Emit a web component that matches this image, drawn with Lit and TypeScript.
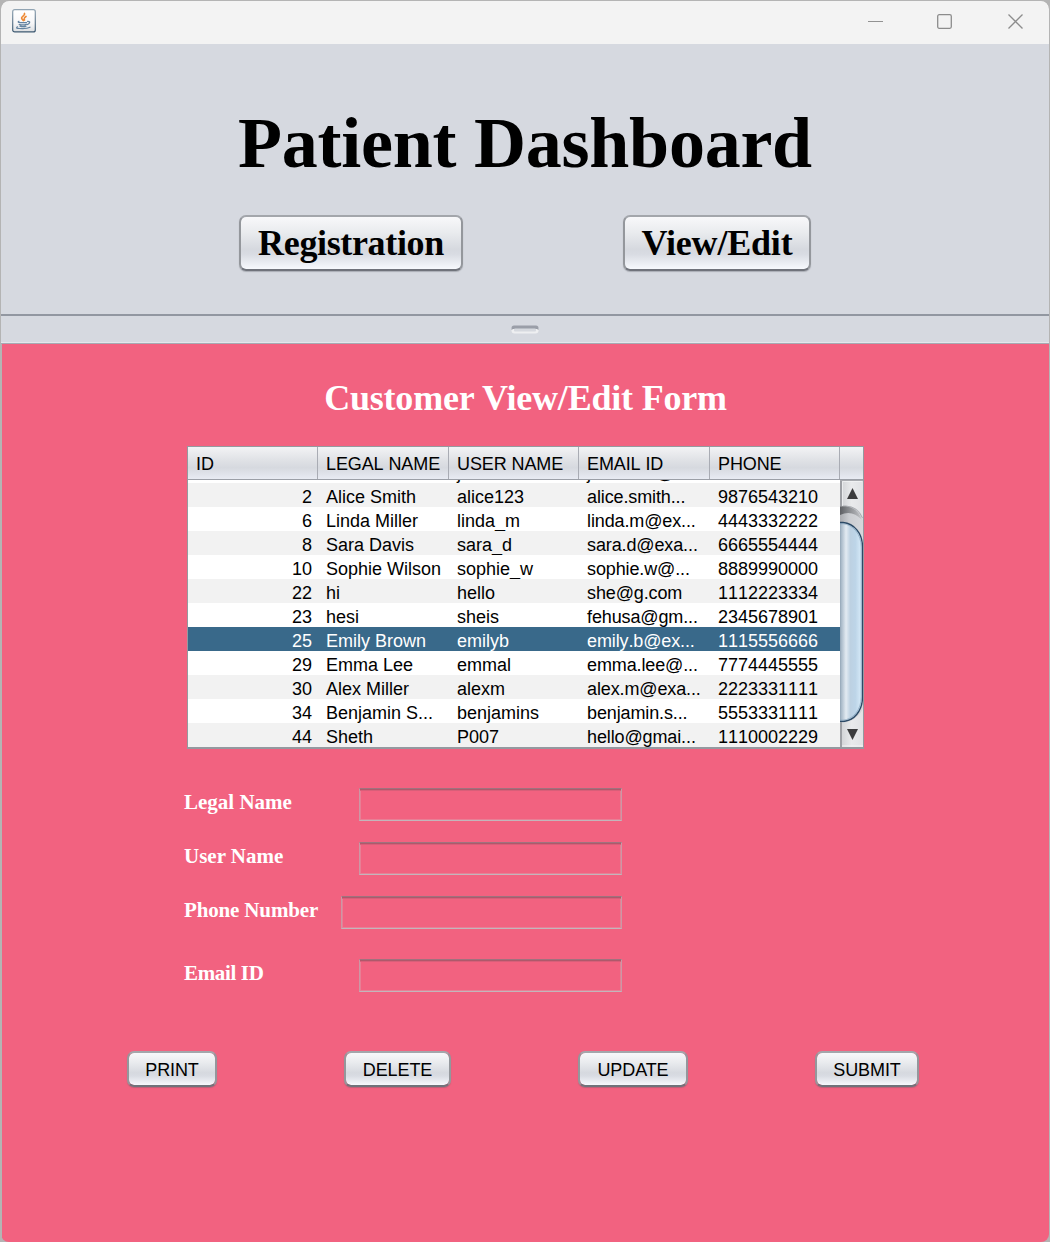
import { LitElement, html, css } from "lit";
import { customElement } from "lit/decorators.js";

const rows: [string, string, string, string, string][] = [
  ["2", "Alice Smith", "alice123", "alice.smith...", "9876543210"],
  ["6", "Linda Miller", "linda_m", "linda.m@ex...", "4443332222"],
  ["8", "Sara Davis", "sara_d", "sara.d@exa...", "6665554444"],
  ["10", "Sophie Wilson", "sophie_w", "sophie.w@...", "8889990000"],
  ["22", "hi", "hello", "she@g.com", "1112223334"],
  ["23", "hesi", "sheis", "fehusa@gm...", "2345678901"],
  ["25", "Emily Brown", "emilyb", "emily.b@ex...", "1115556666"],
  ["29", "Emma Lee", "emmal", "emma.lee@...", "7774445555"],
  ["30", "Alex Miller", "alexm", "alex.m@exa...", "2223331111"],
  ["34", "Benjamin S...", "benjamins", "benjamin.s...", "5553331111"],
  ["44", "Sheth", "P007", "hello@gmai...", "1110002229"],
];

@customElement("app-root")
export class AppRoot extends LitElement {
  static styles = css`
    :host { display: block; width: 1050px; height: 1242px; background: #b4b4b4; overflow: hidden; font-kerning: none; }
    * { box-sizing: border-box; }
    .window { height: 1242px; margin: 0 1px; padding-top: 1px; display: flex; flex-direction: column; border-radius: 9px 9px 8px 8px; overflow: hidden; background: #b4b4b4; }
    .titlebar { height: 43px; flex: none; background: #f3f3f3; display: flex; justify-content: space-between; border-radius: 8px 8px 0 0; padding: 8px 25px 0 11px; }
    .titlebar svg { display: block; }
    .controls { display: flex; gap: 54px; padding-top: 5px; }
    .controls svg:last-child { margin-left: 1px; }
    .top { height: 270px; flex: none; background: #d6d9e0; display: flex; flex-direction: column; align-items: center; padding-top: 57px; font-family: "Liberation Serif", serif; font-weight: bold; color: #000; }
    .top h1 { margin: 0; font-size: 72px; line-height: 84px; height: 84px; white-space: nowrap; letter-spacing: -.25px; }
    .nav { display: flex; justify-content: space-between; width: 572px; margin-top: 30px; }
    .btn { display: flex; align-items: center; justify-content: center; border: 2px solid #8f9299; border-color: #a3a6ab #94979c #70737b; border-radius: 7px; background: linear-gradient(#f8f8fa 0%, #e9ebee 30%, #d6d9df 62%, #d9dce3 72%, #f7f9fd 100%) padding-box; box-shadow: 0 1px 1px rgba(90,92,100,.35); color: #000; white-space: nowrap; padding: 0; margin: 0; font-kerning: none; }
    .nav .btn { font: bold 36px/40px "Liberation Serif", serif; height: 56px; }
    .nav .registration { width: 224px; letter-spacing: -.35px; }
    .nav .view { width: 188px; letter-spacing: -.2px; }
    .divider { height: 30px; flex: none; background: #d6d9e0; border-top: 2px solid #9297a1; border-bottom: 1px solid #a6aab3; display: flex; justify-content: center; padding-top: 9px; box-shadow: inset 0 -1px 0 #e4e6eb; }
    .bottom { flex: 1; background: #f26280; margin-left: 1px; display: flex; flex-direction: column; padding-top: 33px; }
    .bottom h2 { margin: 0; font: bold 36px/42px "Liberation Serif", serif; letter-spacing: -.2px; color: #fff; text-align: center; height: 42px; white-space: nowrap; }
    .table { width: 677px; height: 303px; margin: 27px 0 0 185px; border: 1px solid #95999f; border-bottom-width: 2px; background: #fff; font: 18px/24px "Liberation Sans", sans-serif; font-kerning: none; color: #000; display: flex; flex-direction: column; }
    .head { height: 33px; flex: none; display: grid; grid-template-columns: 130px 131px 130px 131px 130px 23px; background: linear-gradient(#f3f3f5, #e0e2e6 40%, #d6d9df 65%, #e8ebf3); border-bottom: 1px solid #9b9fa7; letter-spacing: -.1px; }
    .head span { padding: 5px 0 0 8px; border-right: 1px solid #a9acb4; white-space: nowrap; }
    .head span:last-child { border: 0; }
    .scroll { display: flex; flex: 1; min-height: 0; }
    .body { width: 652px; height: 267px; overflow: hidden; }
    .spacer { height: 3px; background: #fff; overflow: hidden; display: flex; flex-direction: column; justify-content: flex-end; }
    .row { display: grid; grid-template-columns: 130px 131px 130px 131px 130px; height: 24px; flex: none; line-height: 28px; overflow: hidden; }
    .row span { padding-left: 8px; white-space: nowrap; }
    .row .num { text-align: right; padding: 0 6px 0 0; }
    .row .mail { letter-spacing: -.12px; }
    .body > .row:nth-child(even) { background: #f2f2f2; }
    .body > .row.selected { background: #39698a; color: #fff; }
    .form { display: grid; grid-template-columns: 438px; margin: 39px 0 0 182px; height: 205px; align-content: start; }
    .field { display: flex; justify-content: space-between; height: 54px; font: bold 21px/28px "Liberation Serif", serif; color: #fff; }
    .field.gap { height: 63px; letter-spacing: -.15px; }
    .field.last { letter-spacing: -.35px; }
    .box { width: 263px; height: 33px; border: 1px solid #cb98a5; border-top-color: #a0727e; border-bottom-color: #c3b5bb; box-shadow: inset 0 1px 0 #ae596b, inset 0 2px 0 #d85f79, inset 0 0 0 1px #e87f95; background: transparent; padding: 0; outline: none; border-radius: 0; }
    .wide { width: 281px; }
    .actions { display: flex; margin: 58px 0 0 125px; }
    .actions .btn { font: 18px/20px "Liberation Sans", sans-serif; height: 36px; letter-spacing: -.1px; padding-top: 1px; }
  `;

  private grip() {
    return html`<svg width="28" height="9" viewBox="0 0 28 9">
      <rect x="0.500" y="1" width="27" height="7.500" rx="3" fill="#eeeff1" />
      <path d="M.500 5V3Q.500 .500 3 .500H25Q27.500 .500 27.500 3V5L26 4H2Z" fill="#9a9ea8" />
      <rect x="3" y="3.500" width="22" height="3" rx="1" fill="#d6d9df" />
    </svg>`;
  }

  private scrollbar() {
    return html`<svg width="23" height="267" viewBox="0 0 23 267">
      <defs>
        <linearGradient id="track"><stop stop-color="#a9abaf" /><stop offset=".4" stop-color="#cbcdd1" /><stop offset="1" stop-color="#d6d8dc" /></linearGradient>
        <linearGradient id="thumb"><stop stop-color="#8396a8" /><stop offset=".1" stop-color="#a9bac9" /><stop offset=".3" stop-color="#e3ebf2" /><stop offset=".48" stop-color="#bdd1e2" /><stop offset=".7" stop-color="#bdd5e8" /><stop offset="1" stop-color="#dceffc" /></linearGradient>
        <linearGradient id="cap"><stop stop-color="#cfd1d4" /><stop offset=".5" stop-color="#e9eaec" /><stop offset="1" stop-color="#e1e2e5" /></linearGradient>
        <linearGradient id="shade"><stop stop-color="#505256" /><stop offset=".8" stop-color="#a9abaf" /><stop offset="1" stop-color="#c5c7cb" /></linearGradient>
      </defs>
      <rect width="23" height="267" fill="url(#track)" />
      <path d="M0 26H6Q18 28 22 40Q12 29 0 35Z" fill="url(#shade)" opacity=".85" />
      <path d="M-1 42.500H3C14 43.500 22.500 53 22.500 67V217C22.500 231 14 241 3 241.500H-1Z" fill="url(#thumb)" stroke="#2c4a66" stroke-width="1.400" />
      <path d="M0 43.700H3C13 44.700 21.200 54 21.200 67V217C21.200 230 13 239.500 3 240.200H0" fill="none" stroke="#7d9db8" opacity=".6" />
      <path d="M0 1H23V38Q19 26 6 26H0Z" fill="url(#cap)" />
      <path d="M0 26H6Q18 27 22.500 38" fill="none" stroke="#a9abb0" />
      <path d="M0 242.200H4C13 241.500 20 236 23 228V267H0Z" fill="url(#cap)" />
      <path d="M0 0H2V26H0ZM0 242H2V267H0Z" fill="#9ea0a5" />
      <path d="M0 .500H23" stroke="#a9abb0" />
      <path d="M12.500 8 18 19H7Z" fill="#3c3c3e" />
      <path d="M7 249H18L12.500 260Z" fill="#3c3c3e" />
      <path d="M2.500 26V1.500H22" fill="none" stroke="#f4f5f6" opacity=".7" />
      <path d="M2 266H23" stroke="#f4f5f6" />
    </svg>`;
  }

  render() {
    return html`<div class="window">
      <div class="titlebar">
        <svg width="24" height="24" viewBox="0 0 24 24">
          <defs><linearGradient id="tile" x2="0" y2="1"><stop stop-color="#fff" /><stop offset=".6" stop-color="#f7f7f8" /><stop offset="1" stop-color="#dcdee1" /></linearGradient>
          <linearGradient id="edge" x2="0" y2="1"><stop stop-color="#91a4b3" /><stop offset="1" stop-color="#3e5a72" /></linearGradient></defs>
          <rect x=".7" y=".7" width="22.600" height="22.200" rx="2" fill="url(#tile)" stroke="url(#edge)" stroke-width="1.200" />
          <g fill="none" stroke-linecap="round">
            <path d="M12.500 4.500C13.500 6.500 8.700 7.700 9.700 9.500L11.300 11.500M14 7.500C11.700 9 12 9.700 12.500 11" stroke="#ee8a35" stroke-width="1.700" />
            <path d="M7 12.300Q5 13.300 8 13.500H14.500M7.200 15.300Q10.500 16.500 14.500 15.300M15.500 12.300Q19 12.300 17 14.500L15.500 15.500M8 17.200Q11 18.200 14 17.200M5.500 17.800Q3 19.300 7.500 19.500Q15 20 18 18.200" stroke="#6483a0" stroke-width="1.250" />
          </g>
        </svg>
        <div class="controls">
          <svg width="15" height="15" viewBox="0 0 15 15"><path d="M0 7.500H15" stroke="#929292" /></svg>
          <svg width="15" height="15" viewBox="0 0 15 15"><rect x=".7" y=".7" width="13.600" height="13.600" rx="1.500" fill="none" stroke="#8c8c8c" stroke-width="1.300" /></svg>
          <svg width="17" height="15" viewBox="0 0 17 15"><path d="M1.500.5 15.500 14.500M15.500.5 1.500 14.500" stroke="#8c8c8c" stroke-width="1.300" /></svg>
        </div>
      </div>
      <div class="top">
        <h1>Patient Dashboard</h1>
        <div class="nav"><button class="btn registration">Registration</button><button class="btn view">View/Edit</button></div>
      </div>
      <div class="divider">${this.grip()}</div>
      <div class="bottom">
        <h2>Customer View/Edit Form</h2>
        <div class="table">
          <div class="head"><span>ID</span><span>LEGAL NAME</span><span>USER NAME</span><span>EMAIL ID</span><span>PHONE</span><span></span></div>
          <div class="scroll">
            <div class="body">
              <div class="spacer"><div class="row"><span></span><span></span><span>j</span><span>john.doe@</span><span></span></div></div>
              ${rows.map((r) => html`<div class="row ${r[0] === "25" ? "selected" : ""}"><span class="num">${r[0]}</span><span>${r[1]}</span><span>${r[2]}</span><span class="mail">${r[3]}</span><span>${r[4]}</span></div>`)}
            </div>
            ${this.scrollbar()}
          </div>
        </div>
        <div class="form">
          <label class="field">Legal Name<input class="box" /></label>
          <label class="field">User Name<input class="box" /></label>
          <label class="field gap">Phone Number<input class="box wide" /></label>
          <label class="field last">Email ID<input class="box" /></label>
        </div>
        <div class="actions">
          <button class="btn" style="width:90px">PRINT</button>
          <button class="btn" style="width:107px;margin-left:127px">DELETE</button>
          <button class="btn" style="width:110px;margin-left:127px">UPDATE</button>
          <button class="btn" style="width:104px;margin-left:127px">SUBMIT</button>
        </div>
      </div>
    </div>`;
  }
}
